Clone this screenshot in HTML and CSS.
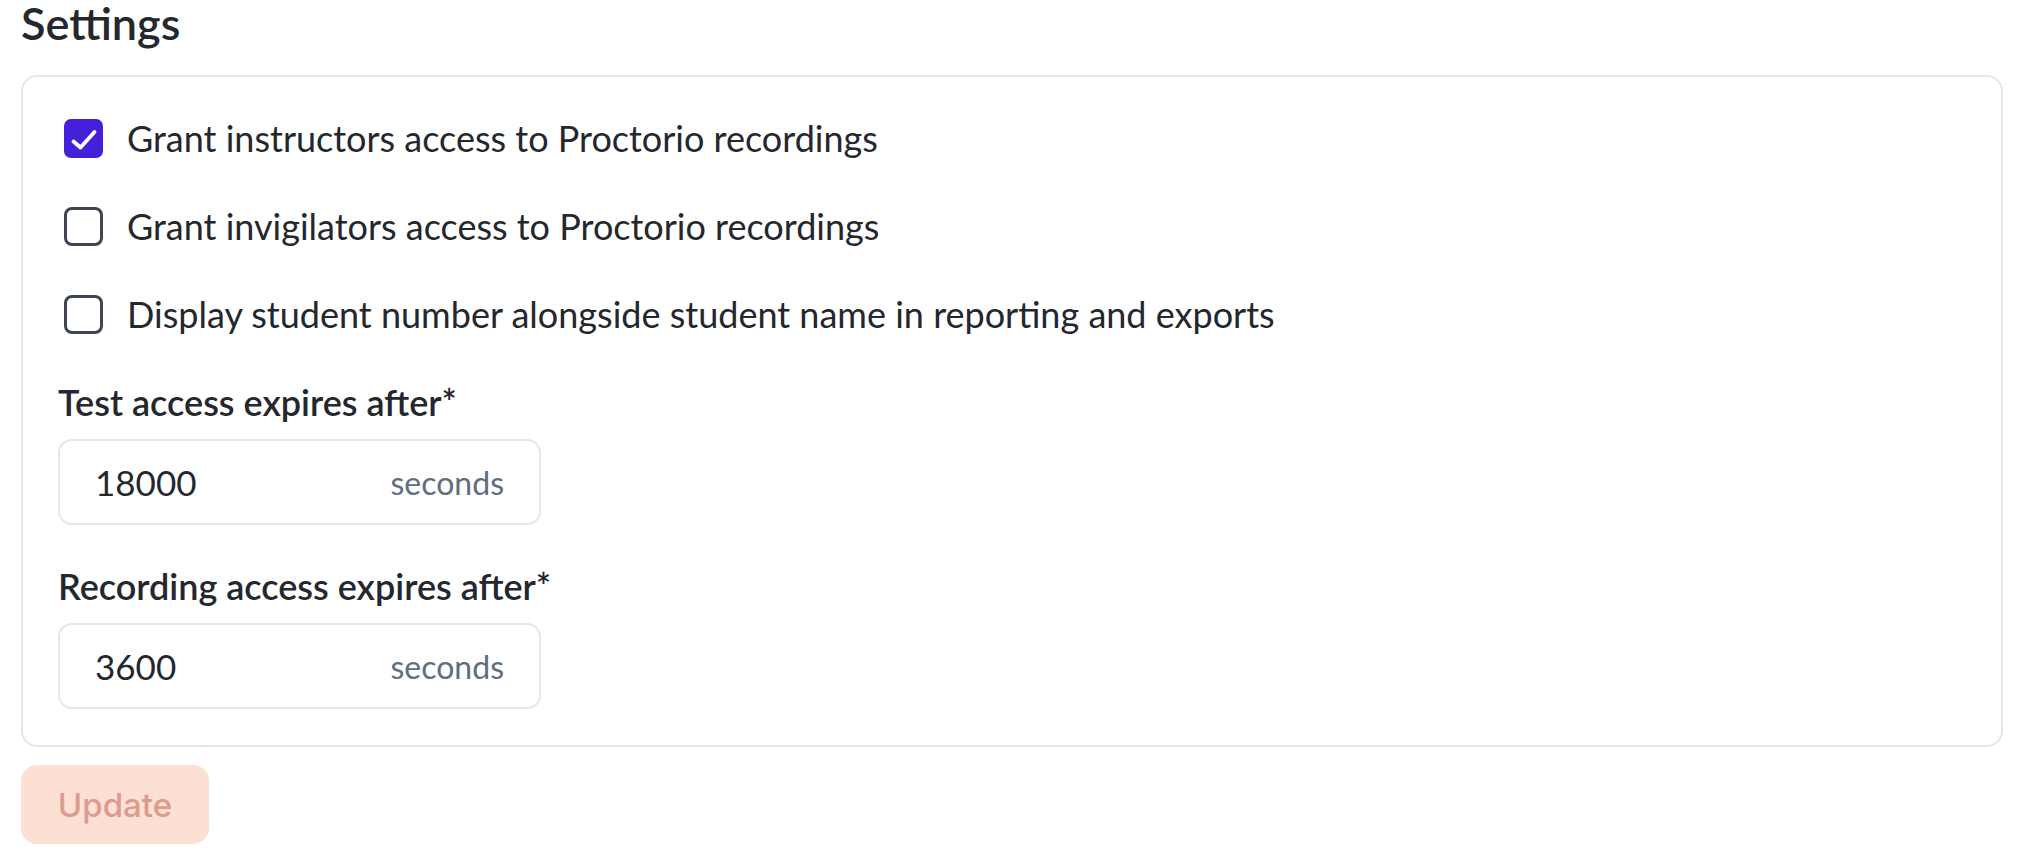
FILE: index.html
```html
<!DOCTYPE html>
<html lang="en">
<head>
<meta charset="utf-8">
<title>Settings</title>
<link rel="stylesheet" href="styles.css">
</head>
<body>
<main class="page">
  <h1 class="title">Settings</h1>
  <section class="card">
    <div class="options">
      <label class="option">
        <span class="box box-checked">
          <svg viewBox="0 0 39 39" width="39" height="39"><path d="M9.5 22.5 L16.5 28.5 L30.5 13" fill="none" stroke="#fff" stroke-width="3.8" stroke-linecap="round" stroke-linejoin="round"/></svg>
        </span>
        <span class="option-text">Grant instructors access to Proctorio recordings</span>
      </label>
      <label class="option">
        <span class="box"></span>
        <span class="option-text">Grant invigilators access to Proctorio recordings</span>
      </label>
      <label class="option">
        <span class="box"></span>
        <span class="option-text">Display student number alongside student name in reporting and exports</span>
      </label>
    </div>
    <div class="field-group">
      <div class="field-label">Test access expires after*</div>
      <div class="field">
        <span class="field-value">18000</span>
        <span class="field-unit">seconds</span>
      </div>
    </div>
    <div class="field-group">
      <div class="field-label">Recording access expires after*</div>
      <div class="field">
        <span class="field-value">3600</span>
        <span class="field-unit">seconds</span>
      </div>
    </div>
  </section>
  <button class="btn-update" type="button">Update</button>
</main>
</body>
</html>
```
FILE: styles.css
```css
* { box-sizing: border-box; }

html, body {
  margin: 0;
  background: #ffffff;
}

body {
  font-family: "Lato", "Noto Sans", sans-serif;
  color: #24272e;
}

.page {
  padding: 1px 35px 0 21px;
  display: flex;
  flex-direction: column;
  align-items: flex-start;
}

.title {
  margin: 0;
  font-size: 45px;
  line-height: 44px;
  font-weight: 600;
  color: #24272e;
}

.card {
  margin-top: 30px;
  width: 1982px;
  border: 2px solid #e7e7e7;
  border-radius: 16px;
  padding: 39px 35px 36px 35px;
  display: flex;
  flex-direction: column;
  gap: 39px;
}

.options {
  display: flex;
  flex-direction: column;
  gap: 44px;
  margin-bottom: 5px;
}

.option {
  display: flex;
  align-items: center;
  height: 44px;
  gap: 24px;
  padding-left: 6px;
  font-size: 36px;
  line-height: 44px;
  cursor: pointer;
}

.box {
  flex: 0 0 39px;
  width: 39px;
  height: 39px;
  border: 3.5px solid #3d4550;
  border-radius: 8px;
  background: #fff;
}

.box-checked {
  border: none;
  border-radius: 7px;
  background: #4421d9;
}

.box svg { display: block; }

.field-group {
  display: flex;
  flex-direction: column;
  gap: 15px;
}

.field-label {
  font-size: 36px;
  line-height: 44px;
  font-weight: 600;
  color: #24272e;
}

.field {
  width: 483px;
  height: 86px;
  border: 2px solid #e7e7e7;
  border-radius: 14px;
  display: flex;
  align-items: center;
  justify-content: space-between;
  padding: 0 35px 0 35px;
}

.field-value {
  font-size: 35px;
  color: #24272e;
}

.field-unit {
  font-size: 32px;
  color: #5e6e7e;
}

.btn-update {
  margin-top: 18px;
  width: 188px;
  height: 79px;
  border: none;
  border-radius: 16px;
  background: #fbe0d3;
  color: #dd9b8d;
  font-family: "Inter", "Lato", sans-serif;
  font-size: 33px;
  font-weight: 500;
  padding: 0;
  cursor: default;
}
```
